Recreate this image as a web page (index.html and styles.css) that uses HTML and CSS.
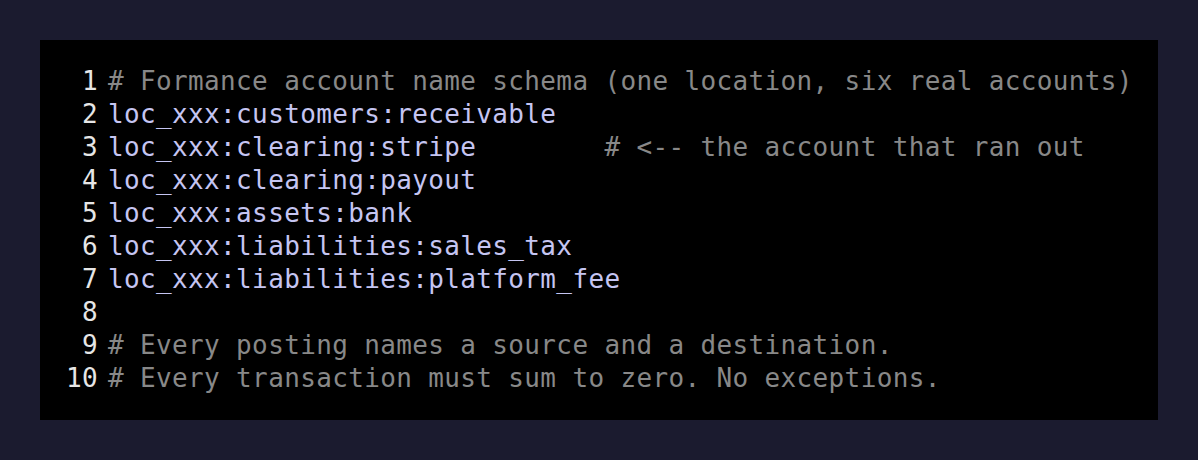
FILE: index.html
```html
<!DOCTYPE html>
<html>
<head>
<meta charset="utf-8">
<link rel="stylesheet" href="styles.css">
</head>
<body>
<div class="page">
  <pre class="code"><div class="line"><span class="ln">1</span><span class="src"><span class="c"># Formance account name schema (one location, six real accounts)</span></span></div><div class="line"><span class="ln">2</span><span class="src"><span class="k">loc_xxx:customers:receivable</span></span></div><div class="line"><span class="ln">3</span><span class="src"><span class="k">loc_xxx:clearing:stripe</span><span class="c">        # &lt;-- the account that ran out</span></span></div><div class="line"><span class="ln">4</span><span class="src"><span class="k">loc_xxx:clearing:payout</span></span></div><div class="line"><span class="ln">5</span><span class="src"><span class="k">loc_xxx:assets:bank</span></span></div><div class="line"><span class="ln">6</span><span class="src"><span class="k">loc_xxx:liabilities:sales_tax</span></span></div><div class="line"><span class="ln">7</span><span class="src"><span class="k">loc_xxx:liabilities:platform_fee</span></span></div><div class="line"><span class="ln">8</span><span class="src"></span></div><div class="line"><span class="ln">9</span><span class="src"><span class="c"># Every posting names a source and a destination.</span></span></div><div class="line"><span class="ln">10</span><span class="src"><span class="c"># Every transaction must sum to zero. No exceptions.</span></span></div></pre>
</div>
</body>
</html>
```
FILE: styles.css
```css
html, body {
  margin: 0;
  padding: 0;
  background: #1b1b2f;
}
.page {
  padding: 40px;
  height: 460px;
  box-sizing: border-box;
}
.code {
  margin: 0;
  background: #000;
  height: 380px;
  box-sizing: border-box;
  padding: 25px 20px 25px 26px;
  font-family: "DejaVu Sans Mono", monospace;
  font-size: 26px;
  line-height: 33px;
  letter-spacing: 0.36px;
  white-space: pre;
}
.line {
  display: flex;
  gap: 10px;
  height: 33px;
}
.ln {
  width: 32px;
  text-align: right;
  color: #e6e6e6;
  flex: none;
}
.k {
  color: #c5c5f2;
}
.c {
  color: #888888;
}
```
